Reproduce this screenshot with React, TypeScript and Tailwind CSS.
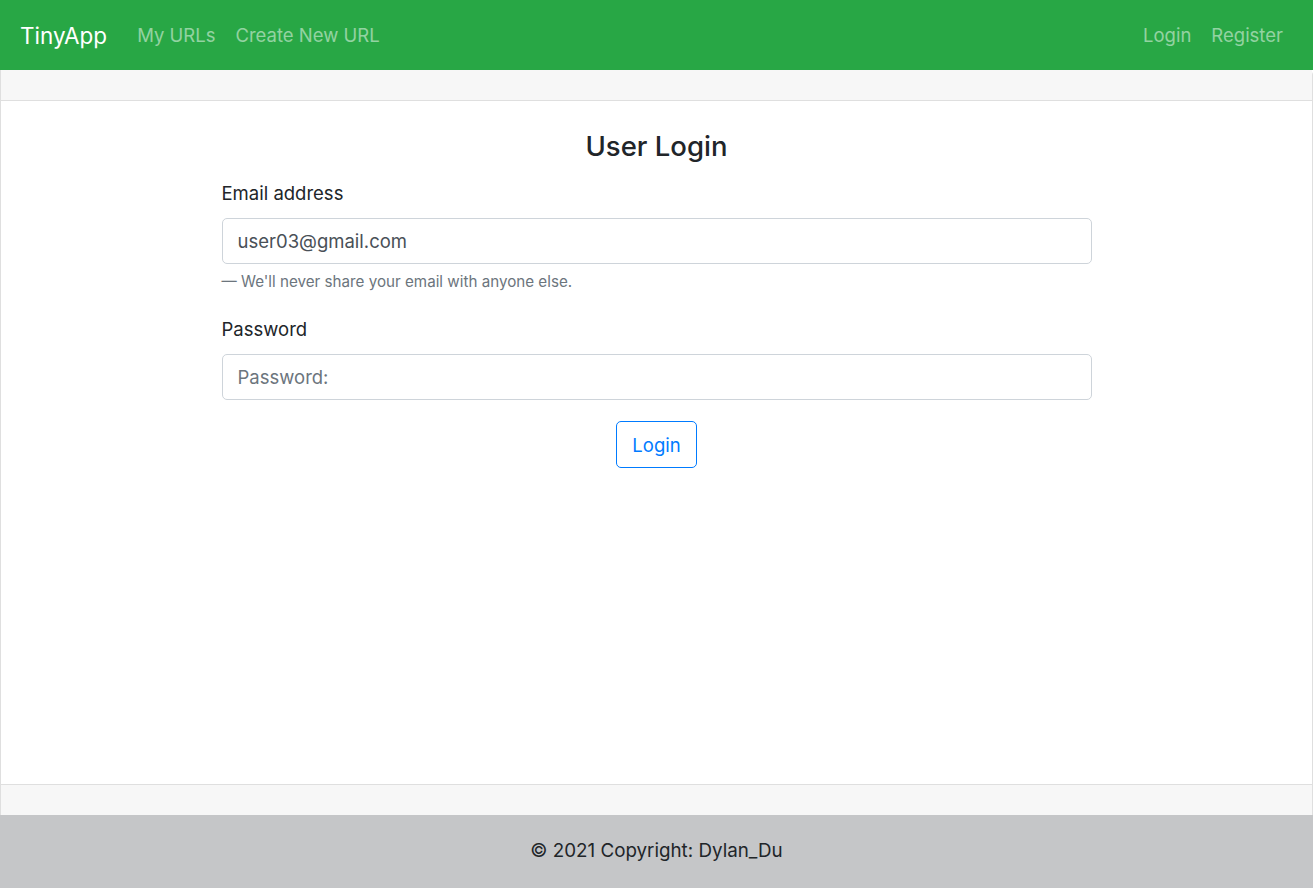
export default function App() {
  return (
    <div
      className="min-h-screen flex flex-col bg-white text-[#212529]"
      style={{ fontFamily: "Inter, 'Noto Sans', sans-serif" }}
    >
      <nav className="h-[70px] bg-[#28a745] flex items-center px-[20px] pt-[2px]">
        <a href="#" className="text-white text-[22.5px] mr-[20px]">
          TinyApp
        </a>
        <div className="flex items-center text-[18.5px] text-white/50">
          <a href="#" className="px-[10px]">My URLs</a>
          <a href="#" className="px-[10px]">Create New URL</a>
        </div>
        <div className="ml-auto flex items-center text-[18.5px] text-white/50">
          <a href="#" className="px-[10px]">Login</a>
          <a href="#" className="px-[10px]">Register</a>
        </div>
      </nav>

      <div className="flex-1 flex flex-col border-x border-[#dfdfdf] rounded-tr-[5px]">
        <div className="h-[31px] bg-[#f7f7f7] border-b border-[#dfdfdf]" />
        <div className="flex-1 pt-[28px]">
          <form className="w-[870px] mx-auto">
            <h3 className="text-center text-[27.5px] font-medium leading-[34px]">User Login</h3>
            <label className="block mt-[15px] text-[18.5px] leading-[30px]">Email address</label>
            <input
              type="email"
              defaultValue="user03@gmail.com"
              className="mt-[10px] w-full h-[46px] border border-[#ced4da] rounded-[5px] px-[15px] text-[18.5px] text-[#495057] outline-none"
            />
            <p className="mt-[6px] text-[15.2px] leading-[24px] text-[#6c757d]">
              — We'll never share your email with anyone else.
            </p>
            <label className="block mt-[20px] text-[18.5px] leading-[30px]">Password</label>
            <input
              type="password"
              placeholder="Password:"
              className="mt-[10px] w-full h-[46px] border border-[#ced4da] rounded-[5px] px-[15px] text-[18.5px] placeholder:text-[#6c757d] outline-none"
            />
            <div className="flex justify-center mt-[21px]">
              <button
                type="button"
                className="w-[81px] h-[47px] pt-[2px] border border-[#007bff] rounded-[5px] text-[#007bff] text-[18.5px]"
              >
                Login
              </button>
            </div>
          </form>
        </div>
        <div className="h-[31px] bg-[#f7f7f7] border-t border-[#dfdfdf]" />
      </div>

      <footer className="h-[73px] bg-[#c5c6c8] flex items-center justify-center text-[18.8px]">
        © 2021 Copyright: Dylan_Du
      </footer>
    </div>
  );
}
